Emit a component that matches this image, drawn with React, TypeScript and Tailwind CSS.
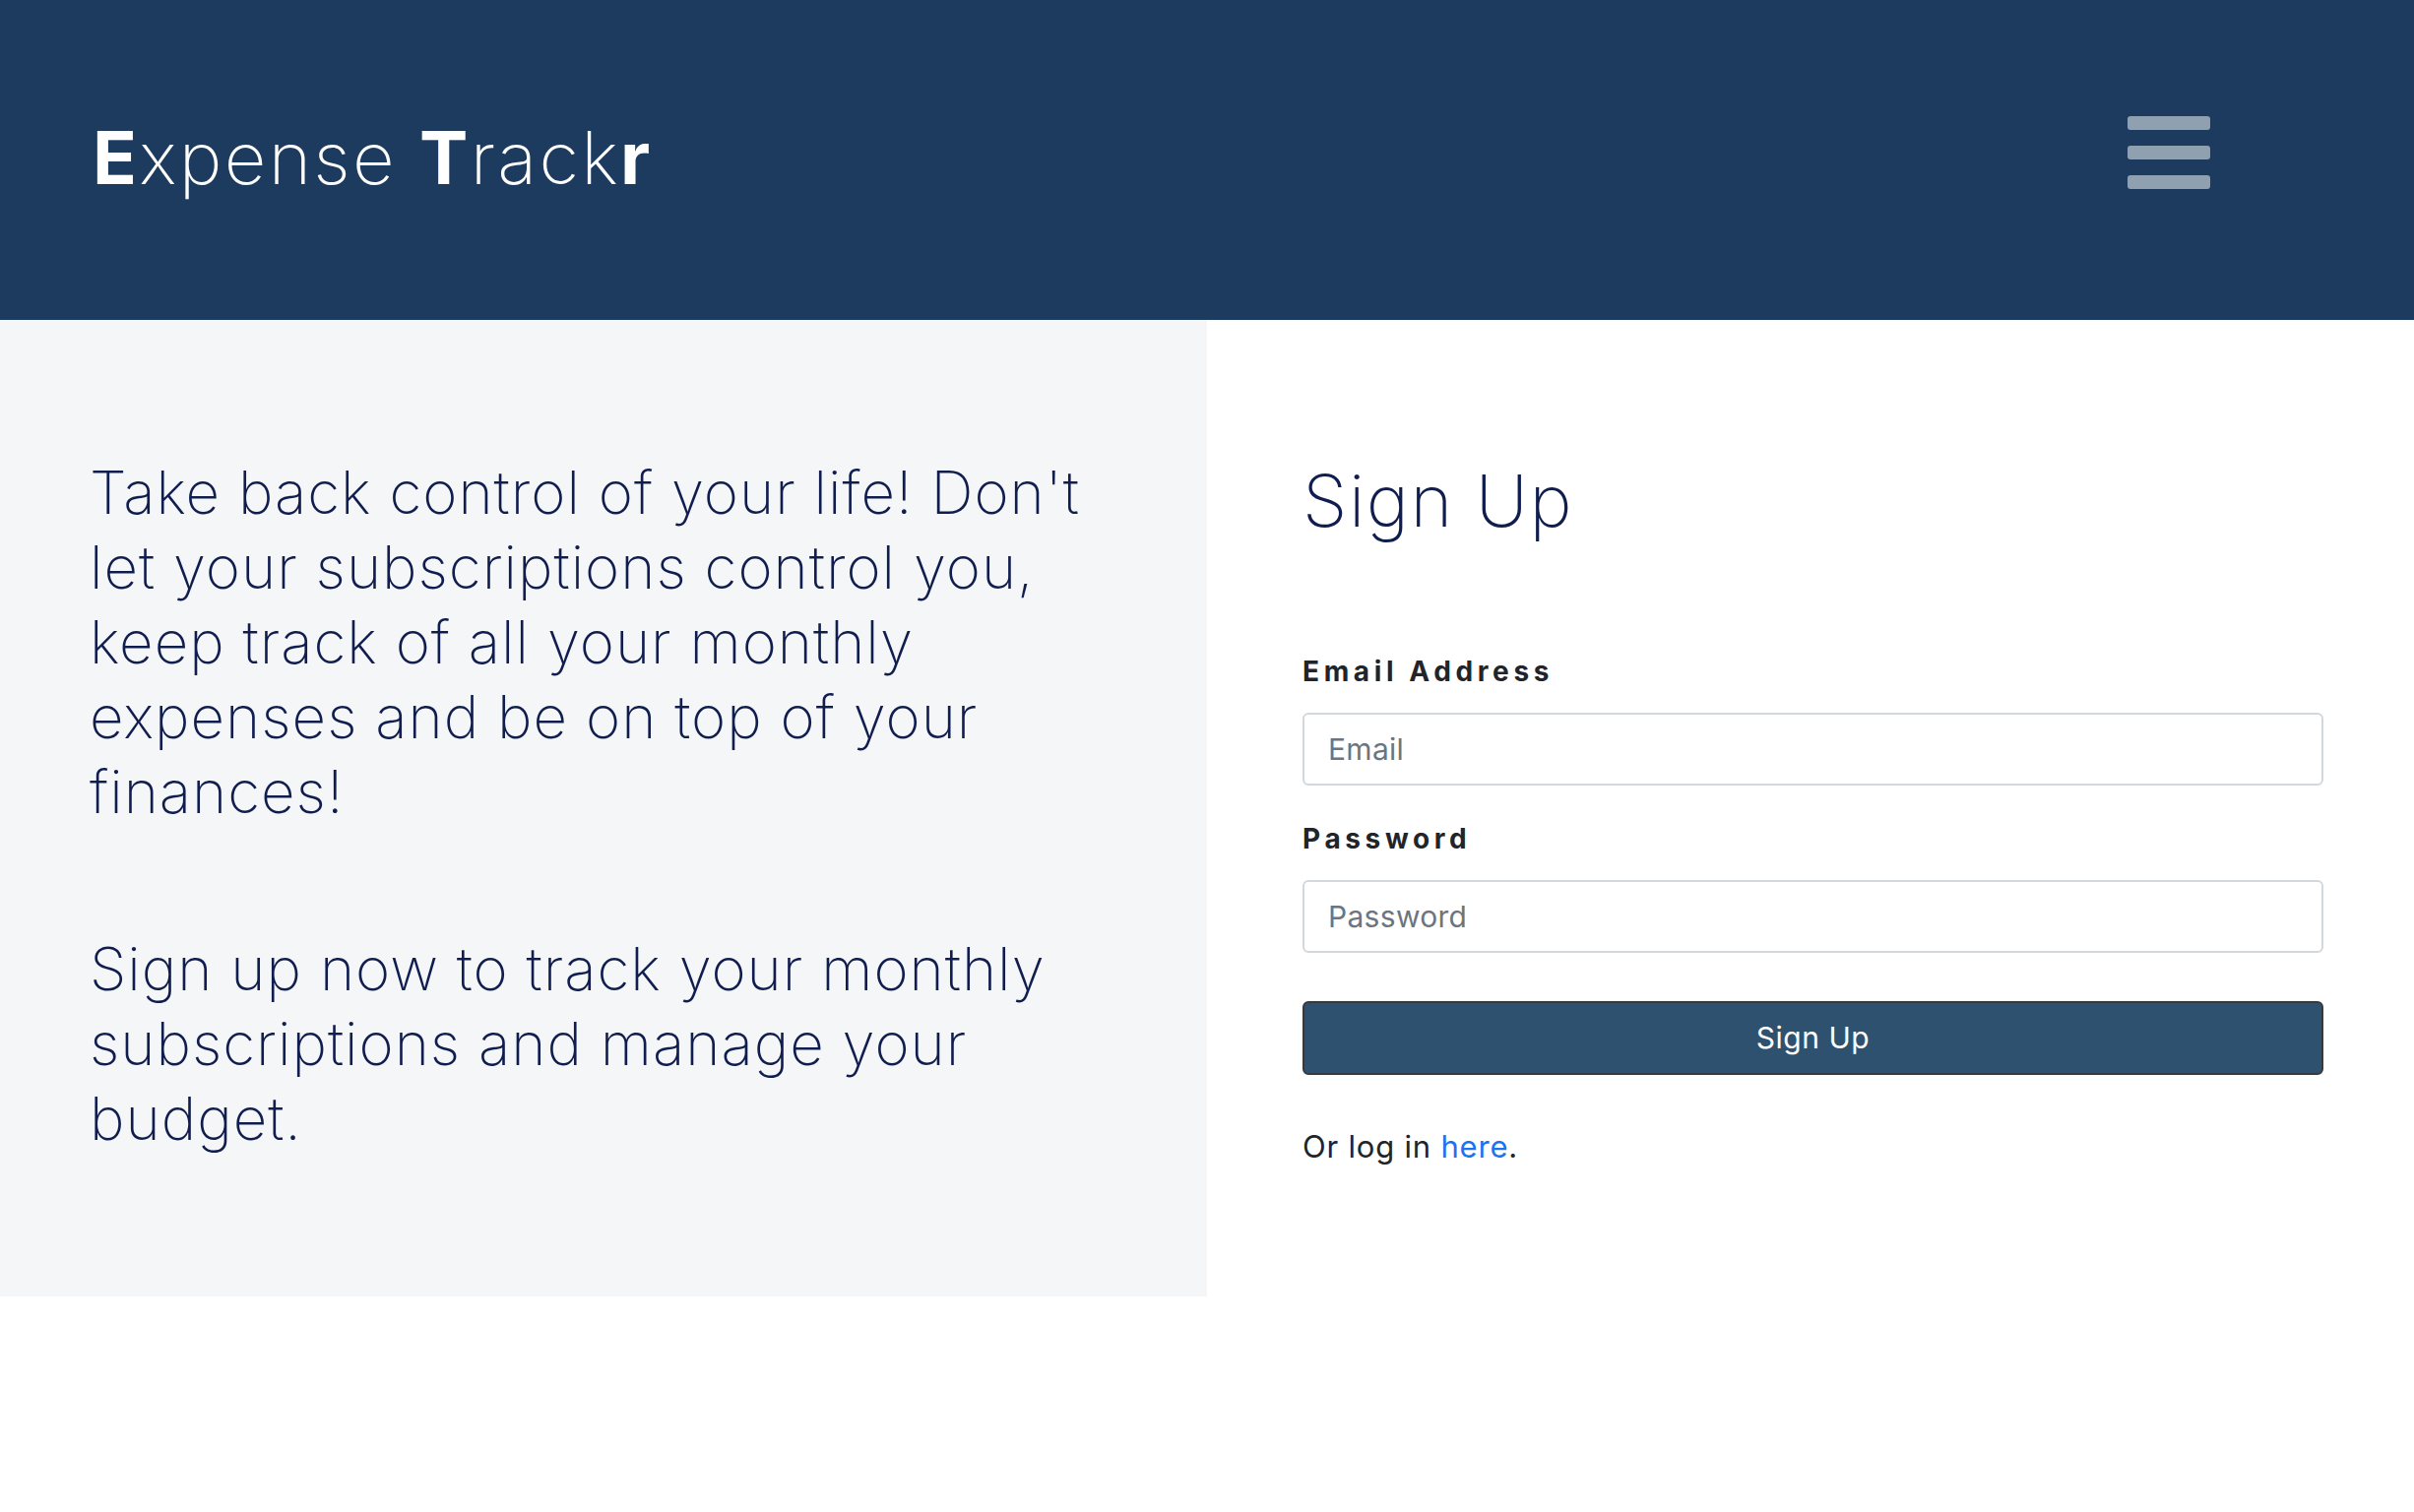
const thin = { fontFamily: 'Inter, "Noto Sans", sans-serif' };

const Logo = () => (
  <h1 className="text-[74px] leading-none text-white font-extralight tracking-[2.3px]" style={thin}>
    <span className="font-bold">E</span>xpense <span className="font-bold">T</span>rack
    <span className="font-bold">r</span>
  </h1>
);

const Hamburger = () => (
  <button type="button" aria-label="menu" className="mb-[10px] flex flex-col gap-[16px]">
    <span className="block w-[84px] h-[14px] rounded-[3px] bg-[#8fa0b1]" />
    <span className="block w-[84px] h-[14px] rounded-[3px] bg-[#8fa0b1]" />
    <span className="block w-[84px] h-[14px] rounded-[3px] bg-[#8fa0b1]" />
  </button>
);

type FieldProps = {
  label: string;
  placeholder: string;
  type: string;
};

const Field = ({ label, placeholder, type }: FieldProps) => (
  <div className="flex flex-col gap-[25px]">
    <label className="text-[28px] leading-[34px] font-bold tracking-[0.165em] text-[#212529]">
      {label}
    </label>
    <input
      type={type}
      placeholder={placeholder}
      className="h-[74px] w-full rounded-[6px] border-2 border-[#d3d8dd] bg-white px-[24px] text-[30px] tracking-[0.3px] text-[#212529] placeholder:text-[#6c757d] outline-none"
    />
  </div>
);

export default function App() {
  return (
    <div className="min-h-screen bg-white" style={thin}>
      <header className="h-[325px] bg-[#1c3b5e] flex items-center justify-between pl-[94px] pr-[207px] pb-[6px]">
        <Logo />
        <Hamburger />
      </header>

      <main className="grid grid-cols-2">
        <section className="bg-[#f5f6f8] pl-[91px] pr-[40px] pt-[137px] pb-[143px] text-[#101d4f]">
          <p className="text-[60px] leading-[76px] font-extralight tracking-[1px] whitespace-nowrap">
            Take back control of your life! Don't
            <br />
            let your subscriptions control you,
            <br />
            keep track of all your monthly
            <br />
            expenses and be on top of your
            <br />
            finances!
          </p>
          <p className="mt-[104px] text-[60px] leading-[76px] font-extralight tracking-[1px] whitespace-nowrap">
            Sign up now to track your monthly
            <br />
            subscriptions and manage your
            <br />
            budget.
          </p>
        </section>

        <section className="pl-[97px] pr-[92px] pt-[140px]">
          <h2 className="text-[73px] leading-[88px] font-extralight tracking-[1.5px] text-[#101d4f]">
            Sign Up
          </h2>
          <form className="mt-[112px] flex flex-col">
            <Field label="Email Address" placeholder="Email" type="email" />
            <div className="mt-[37px]">
              <Field label="Password" placeholder="Password" type="password" />
            </div>
            <button
              type="button"
              className="mt-[49px] h-[75px] w-full rounded-[6px] border-2 border-[#343a40] bg-[#2f5170] text-[30px] tracking-[0.5px] text-white"
            >
              Sign Up
            </button>
          </form>
          <p className="mt-[50px] text-[31px] leading-[45px] tracking-[0.8px] text-[#212529]">
            Or log in <a className="text-[#1a73f0]" href="#">here</a>.
          </p>
        </section>
      </main>
    </div>
  );
}
